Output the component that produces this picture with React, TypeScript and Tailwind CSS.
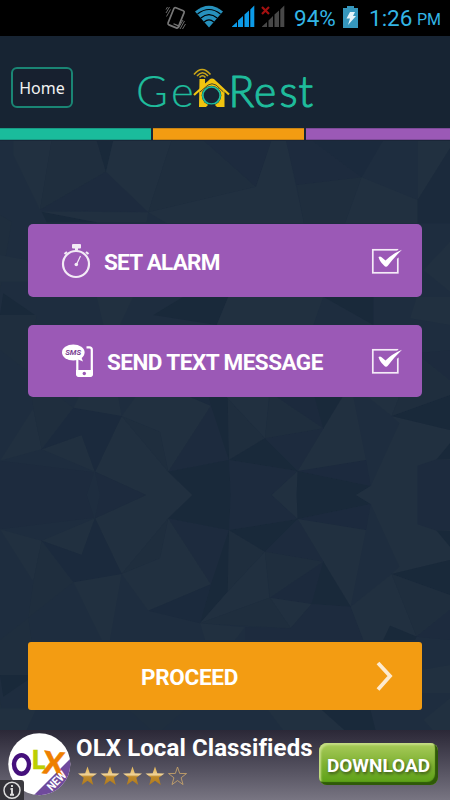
import React from "react";

const L = "#213040";
const M = "#1f2e3e";
const N = "#1d2b3e";
const D = "#19293a";

// Facets of one half of the backdrop, the other half is the same list flipped
const facets: [string, string][] = [
  [N, "0,0 260,0 282,68 0,103"],
  [L, "438,0 577,0 505,70 365,237 285,70"],
  [N, "300,0 438,0 285,70"],
  [L, "125,137 285,70 245,180"],
  ["#1b2a3d", "125,137 245,180 285,70 365,237 220,262"],
  [L, "0,103 125,137 100,260"],
  [M, "125,137 220,262 85,368 100,260"],
  [L, "220,262 365,237 330,435 305,435"],
  [M, "365,237 480,190 505,70"],
  [L, "365,237 480,190 505,70 633,268 445,347"],
  [N, "505,70 687,105 633,268"],
  [D, "577,0 692,0 687,105 505,70"],
  [D, "687,105 683,290 600,385 633,268"],
  ["#1b2a3d", "633,268 445,347 600,385"],
  [M, "687,105 795,170 683,290"],
  [D, "687,105 893,72 795,170"],
  [N, "692,0 815,0 893,72 687,105"],
  [L, "815,0 890,0 893,72"],
  [D, "890,0 1068,0 1112,27 893,72"],
  ["#1c2a3e", "893,72 1112,27 1098,105"],
  [L, "893,72 1098,105 1052,335"],
  [N, "893,72 970,200 795,170"],
  [L, "795,170 808,308 600,385 683,290"],
  [M, "795,170 970,200 810,308"],
  ["#1c2a3d", "970,200 935,327 810,308"],
  [D, "970,200 1052,335 935,327"],
  [L, "810,308 935,327 872,400"],
  [M, "600,385 810,308 872,400"],
  [L, "600,385 735,397 705,435 615,435"],
  [N, "935,327 1052,335 1090,435 735,435 735,397 872,400"],
  [L, "1068,0 1350,0 1350,195 1175,237 1198,215 1112,27"],
  [N, "1253,0 1350,0 1350,105 1310,107 1253,88"],
  [D, "1310,107 1350,107 1350,155"],
  [D, "1175,237 1350,195 1350,300"],
  [L, "1052,335 1175,237 1250,425 1170,392 1150,435 1090,435"],
  [M, "1175,237 1350,300 1350,345 1250,425"],
  [N, "1250,425 1350,345 1350,435"],
  [D, "1170,392 1250,425 1245,435 1150,435"],
  [M, "0,435 85,368 110,540 0,540"],
  [D, "0,540 105,540 10,605"],
  [L, "310,510 360,510 400,595 290,595"],
  [D, "460,540 550,595 685,595 650,510"],
  [L, "650,510 685,595 970,595 940,510"],
  [D, "970,595 1120,595 1120,510"],
  [L, "1230,530 1350,510 1350,595 1250,595"],
  [L, "1270,675 1350,610 1350,760"],
  [M, "0,610 35,820 0,840"],
  [L, "0,640 110,640 80,705 0,720"],
  [M, "380,640 560,640 470,720"],
  [L, "800,640 960,640 1050,720 860,720"],
  [D, "960,640 1110,640 1130,720 1050,720"],
  [L, "40,1065 155,1065 120,855 40,1020"],
  [M, "155,1065 290,1065 318,970 120,855"],
  [N, "120,855 318,970 445,848"],
  [D, "290,1065 340,1065 318,970"],
  [L, "340,1065 515,1065 445,848 318,970"],
  [M, "515,1065 610,1065 768,925 445,848"],
  [N, "610,1065 815,1065 768,925"],
  [L, "445,848 768,925 815,1065 858,1065 912,815 500,815"],
  [N, "858,1065 935,1065 1085,953 890,930"],
  ["#1b2a3d", "935,1065 1150,1065 1085,953"],
  [M, "890,930 1085,953 1035,815 912,815"],
  [L, "1085,953 1253,885 1253,815 1035,815"],
  [L, "1253,1065 1350,1065 1350,1040 1253,885"],
  ["#1b2a3c", "1253,885 1350,1040 1350,815 1253,815"],
  [D, "125,850 290,818 140,818"],
  [L, "125,850 445,848 440,818 290,818"],
  [M, "40,1065 300,1065 210,1330 60,1300"],
  [M, "700,1065 880,1065 1010,1380 780,1380"],
];

function Facets() {
  return (
    <>
      {facets.map(([fill, points], i) => (
        <polygon key={i} points={points} fill={fill} />
      ))}
    </>
  );
}

function Backdrop() {
  return (
    <svg className="[grid-area:1/1] w-[450px] h-[800px]" viewBox="0 -1485 1350 2400">
      <rect y="-1485" width="1350" height="2400" fill="#1e2d3f" />
      <Facets />
      <g transform="scale(1 -1)">
        <Facets />
      </g>
    </svg>
  );
}

function StatusBar() {
  return (
    <div className="h-9 bg-black flex items-start pl-[165px] text-[#33b5e5]">
      <svg className="w-[22px] h-9 shrink-0" viewBox="0 0 22 36" fill="none" stroke="#777">
        <rect x="5.5" y="8.5" width="11" height="18.5" rx="1.5" transform="rotate(22 11 18)" strokeWidth="1.7" />
        <path d="M8.5 23.8l5 2.1" strokeWidth="1.2" />
        <path d="M1 13l3.500-6M1 9.500l1.500-2.500M1.500 16.500l4-7M15 29l4.500-8M17.500 29l3-5M13.500 28l4.500-8" strokeWidth="0.9" />
      </svg>
      <svg className="w-7 h-9 shrink-0 ml-2" viewBox="0 0 28 36" fill="none">
        <path d="M0 11.500Q14 0 28 11.500L14 27.500Z" fill="#2791bd" />
        <path d="M2.500 14Q14 5 25.500 14M5.800 18Q14 11.200 22.200 18M9.200 22Q14 17.800 18.800 22" stroke="#000" strokeWidth="1.2" />
      </svg>
      <svg className="w-[23px] h-9 shrink-0 ml-[9px]" viewBox="0 0 23 36">
        <path d="M0 27V26.500L5 22V27ZM6 27V20.500L11 16V27ZM12.500 27V14.500L17 10.500V27ZM18.300 27V9.500L22.300 5.500V27Z" fill="#0c9be8" />
      </svg>
      <svg className="w-6 h-9 shrink-0 ml-[6px]" viewBox="0 0 24 36">
        <path d="M1 27V26.500L6 22V27ZM7.500 27V20.500L12 16V27ZM13.500 27V14.500L18 10.500V27ZM19.300 27V9.500L23.300 5.500V27Z" fill="#484848" />
        <path d="M1 7l7 7M8 7l-7 7" stroke="#a31010" strokeWidth="2.200" />
      </svg>
      <span className="ml-[9px] mt-[4px] w-[44px] font-[Roboto,sans-serif] text-[22.500px] leading-[28px] whitespace-nowrap">94%</span>
      <svg className="w-[15px] h-9 shrink-0 ml-[5px]" viewBox="0 0 15 36">
        <path d="M4 6h7v2h4v20H0V8h4Z" fill="#3697bd" />
        <path d="M7 12h5l-2 4h3l-8 9 2-6.500H3.500Z" fill="#e6f3f8" />
      </svg>
      <span className="ml-[11px] mt-[4px] w-[44px] font-[Roboto,sans-serif] text-[22.500px] leading-[28px] whitespace-nowrap">1:26</span>
      <span className="ml-[4px] mt-[6px] font-[Roboto,sans-serif] text-[16px] leading-[28px]">PM</span>
    </div>
  );
}

function Logo() {
  return (
    <svg className="w-[190px] h-[60px]" viewBox="130 60 190 60" fill="none">
      <text x="136 171" y="106.500" fontSize="43.500" fontWeight="300" fill="#1fbc9c" stroke="#1fbc9c" strokeWidth="0.200" className="font-[Lato,sans-serif]">
        Ge
      </text>
      {/* house with a signal above the chimney */}
      <path d="M199.500 79h5.500v5l7-4.500 12.500 11.500V107h-25.500Z" fill="#f1c40f" />
      <path d="M194 95l16-14.500q2-1.500 4 0L229 94.500" stroke="#f1c40f" strokeWidth="2.200" />
      <path d="M200 92l8-7q4-2.500 8 0l7.500 7" stroke="#182433" strokeWidth="0.800" />
      <circle cx="211.500" cy="95.500" r="9.800" fill="#182433" />
      <circle cx="211.500" cy="95.500" r="8.700" stroke="#1fbc9c" strokeWidth="1.800" />
      <path d="M206 107l2.500-2.500h6l2.500 2.500Z" fill="#182433" />
      <path d="M194 74.500q8-10 16.500 0M197 76q5.500-6.500 11 0M199.500 77.500q3-3.500 6 0" stroke="#c9a518" strokeWidth="1.600" />
      <text
        x="228.500 254 279.500 298.500"
        y="106.500"
        fontSize="42.500"
        fontWeight="300"
        fill="#1fbc9c"
        stroke="#1fbc9c"
        strokeWidth="1.100"
        strokeLinejoin="round"
        className="font-[Lato,sans-serif]"
      >
        Rest
      </text>
    </svg>
  );
}

function CheckBox() {
  return (
    <svg className="w-[32px] h-[28px] shrink-0" viewBox="0 0 32 28">
      <rect x="1.800" y="2.800" width="25" height="23" fill="none" stroke="#f4ebf7" strokeWidth="1.700" />
      <path d="M22 7.500L30 0V9L24 13Z" fill="#9b59b6" />
      <path d="M7.500 10q2-1.500 4 1l3 2.500Q21 7 31 2.800 23 10.500 17 18.500q-2 2.500-4 0Q8.500 14.500 7.500 10Z" fill="#fff" />
    </svg>
  );
}

function AlarmIcon() {
  return (
    <svg className="w-[30px] h-[36px] shrink-0" viewBox="61 242.500 30 36" fill="none" stroke="#f3ebf6">
      <rect x="72" y="243.500" width="9" height="4.500" rx="1" fill="#f3ebf6" stroke="none" />
      <path d="M76.500 247v3" strokeWidth="3" />
      <circle cx="76" cy="263.500" r="13" strokeWidth="2.200" />
      <path d="M64.500 253.500l2.500-2M88.500 253.500l-2.500-2" strokeWidth="2.200" />
      <path d="M76.500 264l4-8.500" strokeWidth="1.200" />
      <circle cx="76.300" cy="264" r="1.800" fill="#f3ebf6" stroke="none" />
    </svg>
  );
}

function SmsIcon() {
  return (
    <svg className="w-[33px] h-[36px] shrink-0" viewBox="61 343 33 36">
      <rect x="77.300" y="347.300" width="14.500" height="28.500" rx="2.500" fill="none" stroke="#fff" strokeWidth="2.200" />
      <path d="M76 370h17v4q0 3-3 3H79q-3 0-3-3Z" fill="#fff" />
      <circle cx="84.300" cy="373.500" r="1.700" fill="#9b59b6" />
      <path d="M75 345h11.500v15H75Z" fill="#9b59b6" />
      <ellipse cx="73.300" cy="352.500" rx="11.300" ry="8" fill="#fff" />
      <path d="M77 359l6 2.500-2-5Z" fill="#fff" />
      <text x="65.200" y="355.300" fontSize="7.500" fontWeight="700" fontStyle="italic" fill="#7d4494" textLength="16" lengthAdjust="spacingAndGlyphs" className="font-[Roboto,sans-serif]">
        SMS
      </text>
    </svg>
  );
}

const star = "M9.500 0l2.300 6.800 7.200.1-5.700 4.400 2 7.200-5.800-4.200-5.800 4.200 2-7.200L0 6.900l7.200-.1Z";

function Stars() {
  return (
    <svg className="w-[112px] h-5" viewBox="0 0 112 20">
      <defs>
        <linearGradient id="gold" x1="0" y1="0" x2="0" y2="1">
          <stop offset="0.2" stopColor="#e6bb62" />
          <stop offset="0.45" stopColor="#efd39a" />
          <stop offset="0.55" stopColor="#bf8a2a" />
          <stop offset="1" stopColor="#b07a1c" />
        </linearGradient>
      </defs>
      {[0, 22.500, 45, 67.500].map((x) => (
        <path key={x} d={star} transform={`translate(${x} 0.500)`} fill="url(#gold)" />
      ))}
      <path d={star} transform="translate(90.500 1) scale(0.95)" fill="none" stroke="#c9a56a" strokeWidth="0.9" />
    </svg>
  );
}

function OlxIcon() {
  return (
    <svg className="w-[74px] h-[70px] shrink-0" viewBox="0 730 74 70">
      <defs>
        <clipPath id="disc">
          <circle cx="39.300" cy="764.200" r="31" />
        </clipPath>
      </defs>
      <g clipPath="url(#disc)">
        <rect x="8" y="733" width="63" height="63" fill="#fff" />
        <path d="M72 757L33 796H72Z" fill="#6f4a9c" />
      </g>
      <g fontWeight="900" className="font-[Lato,sans-serif]">
        <ellipse cx="21.500" cy="764.500" rx="7.500" ry="9.200" fill="none" stroke="#45107c" strokeWidth="4.400" />
        <text x="31.500" y="769" fontSize="26.500" fill="#bccf00" stroke="#bccf00" strokeWidth="0.500">L</text>
        <text x="43" y="774" fontSize="31" fill="#ee7f00" stroke="#ee7f00" strokeWidth="0.500" transform="rotate(6 53 763)">X</text>
      </g>
      <text x="45.500" y="784.500" fontSize="11.500" fontWeight="700" fill="#fff" textLength="22" lengthAdjust="spacingAndGlyphs" transform="rotate(-45 57 780.500)" className="font-[Roboto,sans-serif]">
        NEW
      </text>
      <path d="M0 780h21q3 0 3 3v17H0Z" fill="#302f35" fillOpacity="0.95" />
      <circle cx="12" cy="790.300" r="8" fill="none" stroke="#ddd" strokeWidth="1.500" />
      <path d="M12 785v2M10.500 789h1.500v5.500M10 794.800h4" stroke="#ddd" strokeWidth="1.900" fill="none" />
    </svg>
  );
}

function AdBanner() {
  return (
    <div className="h-[70px] flex bg-linear-to-b from-[#2b2837] to-[#787582]">
      <OlxIcon />
      <div className="w-[245px] shrink-0 pl-[2px]">
        <p className="mt-[3px] font-[Roboto,sans-serif] font-bold text-[24px] leading-[30px] text-white whitespace-nowrap tracking-[0.100px]">
          OLX Local Classifieds
        </p>
        <div className="mt-[3px] pl-[2px]">
          <Stars />
        </div>
      </div>
      <button className="mt-[13px] w-[119px] h-[42px] shrink-0 rounded-[8px] bg-linear-to-b from-[#a9cc5a] via-[#7fb132] to-[#57a010] shadow-[inset_-3px_-3px_1px_#2f5a08,inset_2px_2px_2px_#c5dd85] font-[Roboto,sans-serif] font-bold text-[19px] leading-[45px] text-white whitespace-nowrap text-center [text-shadow:1px_2px_3px_#3d5a1a]">
        DOWNLOAD
      </button>
    </div>
  );
}

export default function App() {
  return (
    <div className="grid w-[450px] h-[800px] overflow-hidden bg-[#1e2d3f]">
      <Backdrop />
      <div className="[grid-area:1/1] z-10 flex flex-col h-[800px]">
        <StatusBar />

        <header className="h-[92px] bg-[#162230]/75 flex items-start">
          <button className="ml-[11px] mt-[31px] w-[62px] h-[41px] rounded-[6px] border-2 border-[#1a8574] bg-[#17202f] font-['Noto_Sans',sans-serif] text-[16px] text-[#f2f2f2] text-center leading-[39px]">
            Home
          </button>
          <div className="ml-[57px] mt-[24px]">
            <Logo />
          </div>
        </header>

        <div className="h-3 flex gap-[2px] bg-[#1a2637] shadow-[0_1px_0_#1a2637]">
          <div className="w-[151px] bg-[#1abc9c] border-y border-[#199a84]" />
          <div className="w-[151px] bg-[#f39c12] border-y border-[#c98314]" />
          <div className="flex-1 bg-[#9b59b6] border-y border-[#7d4a98]" />
        </div>

        <main className="flex flex-col px-7 pt-[84px]">
          <button className="h-[73px] rounded-[5px] bg-[#9b59b6] flex items-center pl-[33px] pr-[19px]">
            <AlarmIcon />
            <span className="ml-[13px] mt-[4px] font-[Roboto,sans-serif] font-bold text-[22.500px] tracking-[-0.750px] text-white whitespace-nowrap">SET ALARM</span>
            <span className="ml-auto">
              <CheckBox />
            </span>
          </button>
          <button className="mt-7 h-[72px] rounded-[5px] bg-[#9b59b6] flex items-center pl-[33px] pr-[19px]">
            <SmsIcon />
            <span className="ml-[13px] mt-[3px] font-[Roboto,sans-serif] font-bold text-[22.500px] tracking-[-0.530px] text-white whitespace-nowrap">SEND TEXT MESSAGE</span>
            <span className="ml-auto">
              <CheckBox />
            </span>
          </button>
        </main>

        <div className="mt-auto px-7 pb-5">
          <button className="w-full h-[68px] rounded-[3px] bg-[#f39c12] flex items-center pl-[113px] pr-[28px]">
            <span className="mt-[4px] font-[Roboto,sans-serif] font-bold text-[22.500px] tracking-[-0.300px] text-white whitespace-nowrap">PROCEED</span>
            <svg className="ml-auto w-[18px] h-[32px]" viewBox="0 0 18 32" fill="none">
              <path d="M2 3l12 13L2 29.500" stroke="#fdebd0" strokeWidth="3.800" />
            </svg>
          </button>
        </div>

        <AdBanner />
      </div>
    </div>
  );
}
